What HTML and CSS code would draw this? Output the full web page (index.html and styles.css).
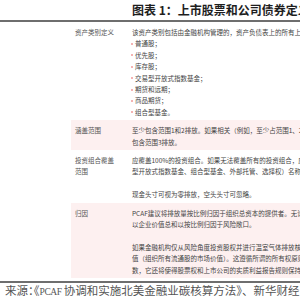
FILE: index.html
```
<!DOCTYPE html>
<html lang="zh-CN">
<head>
<meta charset="utf-8">
<link rel="stylesheet" href="styles.css">
</head>
<body>
<div class="page">
  <div class="title">图表 1：上市股票和公司债券定义与核算方法</div>
  <div class="table">
    <div class="row">
      <div class="label">资产类别定义</div>
      <div class="content">
        <div>该资产类别包括由金融机构管理的，资产负债表上的所有上市股票和公司债券</div>
        <div class="bullet">普通股；</div>
        <div class="bullet">优先股；</div>
        <div class="bullet">库存股；</div>
        <div class="bullet">交易型开放式指数基金；</div>
        <div class="bullet">期货和远期；</div>
        <div class="bullet">商品期货；</div>
        <div class="bullet">组合型基金。</div>
      </div>
    </div>
    <div class="row pink">
      <div class="label">涵盖范围</div>
      <div class="content">
        <div>至少包含范围1和2排放。如果相关（例如，至少占范围1、2排放的40%）</div>
        <div>包含范围3排放。</div>
      </div>
    </div>
    <div class="row">
      <div class="label">投资组合覆盖范围</div>
      <div class="content">
        <div>应覆盖100%的投资组合。如果无法覆盖所有的投资组合，应披露（交易</div>
        <div>型开放式指数基金、组合型基金、外部托管、选择权）名称</div>
        <div class="gap"></div>
        <div>现金头寸可视为零排放，空头头寸可忽略。</div>
      </div>
    </div>
    <div class="row pink">
      <div class="label">归因</div>
      <div class="content">
        <div>PCAF建议将排放量按比例归因于组织总资本的提供者。无论是股权</div>
        <div>以企业价值总和以按比例归因于风险敞口。</div>
        <div class="gap"></div>
        <div>如果金融机构仅从风险角度投资股权并进行温室气体排放核算，则</div>
        <div>值（组织所有流通股的市场价值）。这遵循所谓的所有权原则</div>
        <div>数，它还将使得股票权和上市公司的实质利益报告规则保持一致</div>
      </div>
    </div>
  </div>
  <div class="source">来源<span class="half">：《</span><span class="latin">PCAF</span>协调和实施北美金融业碳核算方法》、新华财经</div>
</div>
</body>
</html>
```
FILE: styles.css
```
html, body {
  margin: 0;
  padding: 0;
  background: #ffffff;
}
.page {
  width: 300px;
  height: 300px;
  overflow: hidden;
  font-family: "Noto Sans CJK SC", "Liberation Sans", sans-serif;
}
.title {
  height: 20px;
  line-height: 20px;
  padding-left: 132px;
  font-size: 12px;
  font-weight: bold;
  color: #1e1e1e;
  white-space: nowrap;
  border-bottom: 2px solid #6e6e6e;
}
.table {
  margin-left: 71px;
}
.row {
  display: grid;
  grid-template-columns: 58px 300px;
  font-size: 6.5px;
  line-height: 11.4px;
  padding: 5px 0 2px 0;
}
.row.pink {
  background: #fdf0f0;
}
.label {
  padding-left: 4px;
  padding-right: 10px;
  color: #555555;
}
.content {
  padding-left: 3px;
  color: #444444;
  white-space: nowrap;
}
.bullet {
  position: relative;
  padding-left: 3px;
}
.bullet::before {
  content: "";
  position: absolute;
  left: -1px;
  top: 4.5px;
  width: 2px;
  height: 2px;
  border-radius: 50%;
  background: #f09a9a;
}
.gap {
  height: 11.4px;
}
.source {
  margin-top: 3px;
  border-top: 2px solid #6e6e6e;
  padding-left: 5px;
  font-family: "Noto Sans CJK SC", "Liberation Serif", serif;
  font-size: 11.5px;
  line-height: 14px;
  color: #555555;
  white-space: nowrap;
}
.half {
  font-feature-settings: "halt";
}
.latin {
  font-family: "Liberation Serif", serif;
  font-size: 9.5px;
  letter-spacing: -0.4px;
  margin-right: 2px;
}
```
